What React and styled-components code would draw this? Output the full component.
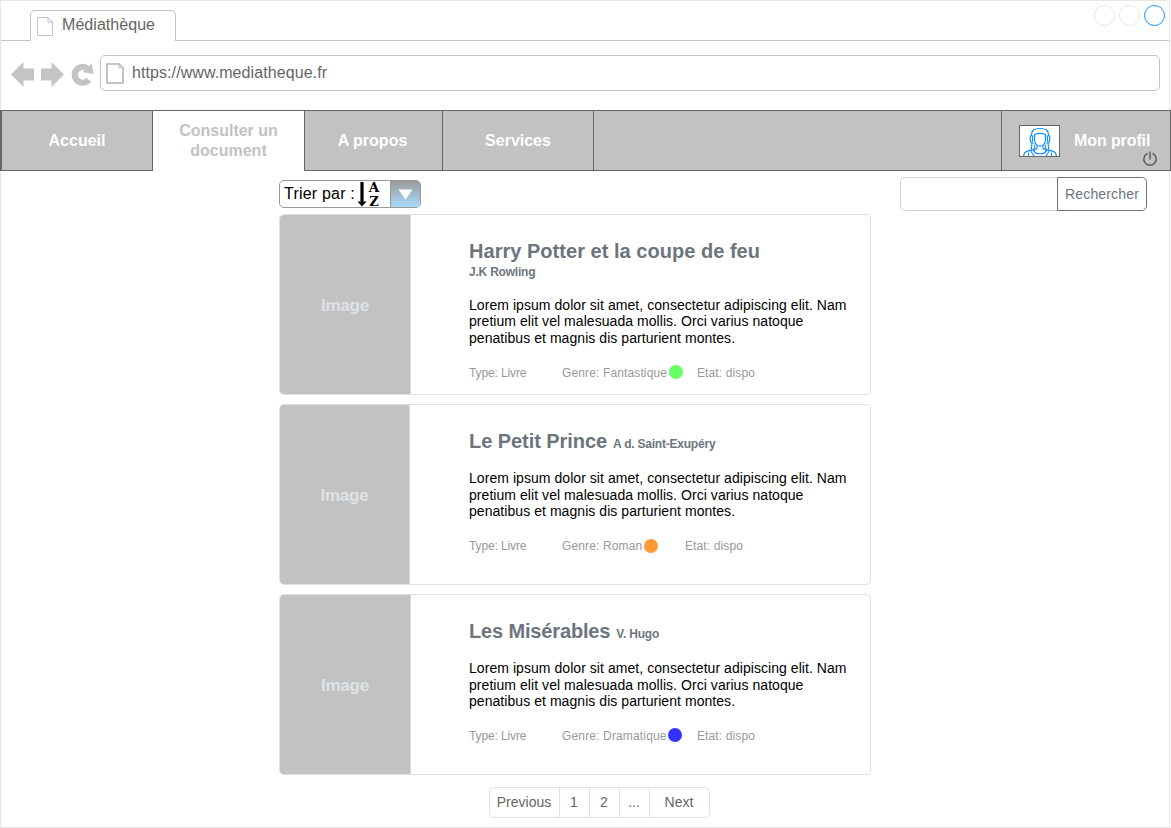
import React from 'react';
import styled, { createGlobalStyle } from 'styled-components';

const Global = createGlobalStyle`
  * { box-sizing: border-box; }
  body {
    margin: 0;
    background: #fff;
    font-family: "Liberation Sans", Arial, sans-serif;
    overflow: hidden;
  }
  button, input { font-family: inherit; padding: 0; }
`;

const Window = styled.div`
  width: 1170px;
  height: 828px;
  border: 1px solid #e6e6e6;
  display: flex;
  flex-direction: column;
`;

/* Browser chrome */
const TabStrip = styled.div`
  height: 40px;
  flex: none;
  display: flex;
  align-items: flex-end;
`;
const StripStart = styled.div`
  width: 29px;
  border-bottom: 1px solid #c4c4c4;
`;
const StripRest = styled.div`
  flex: 1;
  align-self: stretch;
  border-bottom: 1px solid #c4c4c4;
  display: flex;
  justify-content: flex-end;
  gap: 4px;
  padding: 4px 4px 0 0;
`;
const Tab = styled.div`
  width: 146px;
  height: 31px;
  border: 1px solid #c4c4c4;
  border-bottom: 0;
  border-radius: 5px 5px 0 0;
  display: flex;
  align-items: flex-start;
  gap: 9px;
  padding: 5px 0 0 6px;
  font-size: 16px;
  line-height: 18px;
  color: #666;
  svg { margin-top: 1px; }
`;
const TabTitle = styled.span`letter-spacing: 0.05px;`;
const WindowDot = styled.span`
  width: 21px;
  height: 21px;
  border-radius: 50%;
  border: 1px solid ${(p) => (p.$active ? '#1890ff' : '#e6e6e6')};
`;
const Toolbar = styled.div`
  height: 69px;
  flex: none;
  display: flex;
  align-items: flex-start;
  padding: 14px 9px 0 10px;
`;
const NavIcons = styled.div`
  display: flex;
  gap: 7px;
  width: 89px;
  padding-top: 7px;
`;
const Address = styled.div`
  flex: 1;
  height: 36px;
  border: 1px solid #c4c4c4;
  border-radius: 5px;
  display: flex;
  gap: 8px;
  padding: 7px 0 0 5px;
  font-size: 16px;
  line-height: 20px;
  letter-spacing: 0.08px;
  color: #666;
`;

/* Site navigation */
const Nav = styled.nav`
  width: 1171px;
  height: 61px;
  flex: none;
  margin-left: -1px;
  display: flex;
  background: #c2c2c2;
  border-left: 1px solid #666;
`;
const NavItem = styled.a`
  width: ${(p) => p.$width}px;
  display: flex;
  align-items: center;
  justify-content: center;
  text-align: center;
  font-size: 16px;
  font-weight: 700;
  line-height: 20px;
  color: ${(p) => (p.$active ? '#c2c2c2' : '#fff')};
  background: ${(p) => (p.$active ? '#fff' : 'transparent')};
  border-top: 1px solid #666;
  border-right: 1px solid #666;
  border-bottom: ${(p) => (p.$active ? '0' : '1px solid #666')};
  padding: 0 10px ${(p) => (p.$active ? 1 : 0)}px ${(p) => p.$padLeft || 10}px;
  &:first-child { border-left: 1px solid #666; }
`;
const NavSpace = styled.div`
  flex: 1;
  border: 1px solid #666;
  border-left: 0;
`;
const Profile = styled.a`
  position: relative;
  width: 169px;
  display: flex;
  align-items: center;
  gap: 14px;
  padding-left: 17px;
  font-size: 16px;
  font-weight: 700;
  line-height: 20px;
  letter-spacing: -0.1px;
  color: #fff;
  border: 1px solid #666;
  border-left: 0;
`;
const Avatar = styled.span`
  width: 41px;
  height: 32px;
  border: 1px solid #666;
  background: #fff;
  display: flex;
  svg { display: block; }
`;
const Power = styled.svg`
  position: absolute;
  right: 12px;
  bottom: 3px;
`;

/* Page body */
const Main = styled.main`
  display: grid;
  grid-template-columns: 278px 592px 1fr;
  padding-top: 6px;
`;
const Content = styled.section`
  grid-column: 2;
  display: flex;
  flex-direction: column;
  padding-top: 3px;
`;
const Sort = styled.div`
  width: 142px;
  height: 28px;
  margin-bottom: 6px;
  display: flex;
  border: 1px solid #999;
  border-radius: 5px;
  font-size: 16px;
  line-height: 18px;
  letter-spacing: 0.2px;
  color: #000;
`;
const SortText = styled.span`
  width: 73px;
  padding: 4px 0 0 4px;
  white-space: nowrap;
  flex: none;
`;
const SortIcon = styled.svg`
  margin-left: 4px;
  flex: none;
  overflow: visible;
  letter-spacing: 0;
`;
const SortButton = styled.button`
  width: 30px;
  margin-left: auto;
  border: 0;
  border-left: 1px solid #999;
  border-radius: 0 4px 4px 0;
  background: linear-gradient(#999, #a9dcff);
  display: flex;
  justify-content: center;
  align-items: center;
`;
const Search = styled.form`
  grid-column: 3;
  display: flex;
  width: 247px;
  height: 34px;
  margin-left: 29px;
`;
const SearchInput = styled.input`
  width: 157px;
  border: 1px solid #ced4da;
  border-right: 0;
  border-radius: 5px 0 0 5px;
  background: #fff;
`;
const SearchButton = styled.button`
  flex: 1;
  border: 1px solid #6c757d;
  border-radius: 0 5px 5px 0;
  background: #fff;
  color: #6c757d;
  font-size: 14px;
  letter-spacing: 0.16px;
`;
const Cards = styled.div`
  display: flex;
  flex-direction: column;
  gap: 9px;
`;
const Card = styled.article`
  height: 181px;
  display: flex;
  border: 1px solid #dfdfdf;
  border-radius: 5px;
  overflow: hidden;
`;
const Cover = styled.div`
  width: ${(p) => p.$width}px;
  flex: none;
  padding: 2px 0 0 0;
  border-right: 1px solid #d9dadb;
  background: #c2c2c2;
  display: flex;
  align-items: center;
  justify-content: center;
  font-size: 17px;
  font-weight: 700;
  letter-spacing: -0.2px;
  color: #dee2e6;
`;
const Details = styled.div`
  flex: 1;
  margin-left: auto;
  padding: 24px 0 0 ${(p) => p.$indent}px;
`;
const Heading = styled.header`
  display: flex;
  flex-direction: ${(p) => (p.$stacked ? 'column' : 'row')};
  align-items: ${(p) => (p.$stacked ? 'flex-start' : 'baseline')};
  gap: ${(p) => (p.$stacked ? '2px' : '6px')};
  margin-bottom: ${(p) => (p.$stacked ? '17.7px' : '17.3px')};
  color: #6c757d;
`;
const Title = styled.h2`
  margin: 0;
  font-size: 20px;
  line-height: 24px;
  letter-spacing: ${(p) => p.$spacing}px;
`;
const Author = styled.span`
  font-size: 12px;
  font-weight: 700;
  line-height: 14px;
  letter-spacing: -0.22px;
`;
const Summary = styled.p`
  margin: 0 0 ${(p) => (p.$stacked ? 19.8 : 19.2)}px;
  width: 390px;
  font-size: 14px;
  line-height: 16.5px;
  letter-spacing: 0.055px;
  color: #000;
`;
const Meta = styled.div`
  display: flex;
  font-size: 12px;
  line-height: 14px;
  color: #999;
`;
const MetaItem = styled.span`
  width: ${(p) => p.$width}px;
  display: flex;
  white-space: nowrap;
  letter-spacing: ${(p) => p.$spacing || 0}px;
`;
const Status = styled.i`
  width: 14px;
  height: 14px;
  margin: ${(p) => p.$lift}px 0 0 ${(p) => p.$gap}px;
  border-radius: 50%;
  background: ${(p) => p.$color};
  flex: none;
`;
const Pagination = styled.nav`
  align-self: flex-start;
  display: flex;
  height: 31px;
  margin: 12px 0 0 210px;
  border: 1px solid #dee2e6;
  border-radius: 5px;
`;
const Page = styled.a`
  width: ${(p) => p.$width}px;
  display: flex;
  align-items: center;
  justify-content: center;
  padding: 0 1px 1px 0;
  font-size: 14px;
  line-height: 16px;
  color: #666;
  & + & { border-left: 1px solid #dee2e6; }
`;

const DocIcon = ({ w, h, stroke }) => (
  <svg width={w} height={h} viewBox={`0 0 ${w} ${h}`} fill="none" stroke="#c4c4c4" strokeWidth={stroke}>
    <path d={`M${stroke / 2} ${stroke / 2}H${w - 5}L${w - stroke / 2} 5V${h - stroke / 2}H${stroke / 2}Z`} />
    <path d={`M${w - 5} 0V5H${w}`} strokeWidth="1" />
  </svg>
);

const BOOKS = [
  {
    title: 'Harry Potter et la coupe de feu', spacing: 0.03, author: 'J.K Rowling', stacked: true,
    cover: 131, genre: 'Fantastique', genreSpacing: 0.13, genreWidth: 135, color: '#66ff66', lift: -1, gap: 2,
  },
  {
    title: 'Le Petit Prince', spacing: -0.06, author: 'A d. Saint-Exupéry',
    cover: 130, genre: 'Roman', genreSpacing: 0.13, genreWidth: 123, color: '#ff9933', lift: 0, gap: 2,
  },
  {
    title: 'Les Misérables', spacing: -0.15, author: 'V. Hugo',
    cover: 131, genre: 'Dramatique', genreSpacing: 0.15, genreWidth: 135, color: '#3333ff', lift: -1, gap: 1,
  },
];

const Book = ({ book }) => (
  <Card>
    <Cover $width={book.cover}>Image</Cover>
    <Details $indent={189 - book.cover}>
      <Heading $stacked={book.stacked}>
        <Title $spacing={book.spacing}>{book.title}</Title>
        <Author>{book.author}</Author>
      </Heading>
      <Summary $stacked={book.stacked}>
        Lorem ipsum dolor sit amet, consectetur adipiscing elit. Nam<br />
        pretium elit vel malesuada mollis. Orci varius natoque<br />
        penatibus et magnis dis parturient montes.
      </Summary>
      <Meta>
        <MetaItem $width={93} $spacing={-0.12}>Type: Livre</MetaItem>
        <MetaItem $width={book.genreWidth} $spacing={book.genreSpacing}>
          Genre: {book.genre}
          <Status $color={book.color} $lift={book.lift} $gap={book.gap} />
        </MetaItem>
        <MetaItem $spacing={0.12}>Etat: dispo</MetaItem>
      </Meta>
    </Details>
  </Card>
);

export default function App() {
  return (
    <>
      <Global />
      <Window>
        <TabStrip>
          <StripStart />
          <Tab>
            <DocIcon w={16} h={19} stroke={1} />
            <TabTitle>Médiathèque</TabTitle>
          </Tab>
          <StripRest>
            <WindowDot />
            <WindowDot />
            <WindowDot $active />
          </StripRest>
        </TabStrip>
        <Toolbar>
          <NavIcons>
            <svg width="23" height="25" viewBox="0 0 23 25" fill="#c4c4c4">
              <path d="M0 12.5 12.5 0V6.5H23V18.5H12.5V25Z" />
            </svg>
            <svg width="23" height="25" viewBox="0 0 23 25" fill="#c4c4c4">
              <path d="M23 12.5 10.5 0V6.5H0V18.5H10.5V25Z" />
            </svg>
            <svg width="24" height="25" viewBox="0 0 24 25">
              <path d="M16.500 6.600A7.900 7.900 0 1 0 17.800 17.800" fill="none" stroke="#c4c4c4" strokeWidth="6.200" />
              <path d="M20.800 1.500 22.600 12 11.500 10Z" fill="#c4c4c4" />
            </svg>
          </NavIcons>
          <Address>
            <DocIcon w={18} h={21} stroke={2} />
            <span>https://www.mediatheque.fr</span>
          </Address>
        </Toolbar>
        <Nav>
          <NavItem $width={152}>Accueil</NavItem>
          <NavItem $width={152} $active>Consulter un<br />document</NavItem>
          <NavItem $width={138} $padLeft={8}>A propos</NavItem>
          <NavItem $width={151}>Services</NavItem>
          <NavSpace />
          <Profile>
            <Avatar>
              <svg width="39" height="30" viewBox="0 0 39 30" fill="none" stroke="#1890ff" strokeWidth="1.2">
                <path d="M11.500 10C11.500 4 14 2.500 20 2.500S28.500 4 28.500 10" />
                <path d="M14.500 14V8.500C18 7 22 7 25.500 8.500V14C25.500 17.500 23 20 20 20S14.500 17.500 14.500 14Z" />
                <path d="M11.500 9C9.500 11 10 14 11 16.500L13.500 17.500M28.500 9C30.500 11 30 14 29 16.500L26.500 17.500" />
                <path d="M12.500 9.500V16M27.500 9.500V16M12 17 11 25.500M15 18.500 13.500 25.500M28 17 29 25.500M25 18.500 26.500 25.500" />
                <path d="M17 20V22.500C15 24.500 7 24 4.500 27L3.500 30M23 20V22.500C25 24.500 33 24 35.500 27L36.500 30" />
                <path d="M14 24.500C15 29 25 29 26 24.500M8.500 26.500V30M31.500 26.500V30M11 25.500 14 30M29 25.500 26 30" />
              </svg>
            </Avatar>
            <span>Mon profil</span>
            <Power width="16" height="16" viewBox="0 0 16 16" fill="none" stroke="#555" strokeWidth="1.4">
              <path d="M5.500 2.400A6.200 6.200 0 1 0 10.500 2.400" />
              <path d="M8 0.500V8.500" />
            </Power>
          </Profile>
        </Nav>
        <Main>
          <Content>
            <Sort>
              <SortText>Trier par :</SortText>
              <SortIcon width="24" height="26" viewBox="0 0 24 26">
                <path d="M3.400 1H6.600V20.500H9.500L5 25.500 0.500 20.500H3.400Z" fill="#000" />
                <text x="11.800" y="10.800" fontFamily="DejaVu Serif, serif" fontWeight="700" fontSize="13" textLength="10.500" lengthAdjust="spacingAndGlyphs">A</text>
                <text x="12.300" y="24.600" fontFamily="DejaVu Serif, serif" fontWeight="700" fontSize="13.500" textLength="9.500" lengthAdjust="spacingAndGlyphs">Z</text>
              </SortIcon>
              <SortButton>
                <svg width="15" height="11" viewBox="0 0 15 11"><path d="M0.500 0.500H14.500L7.500 10.500Z" fill="#fff" /></svg>
              </SortButton>
            </Sort>
            <Cards>
              {BOOKS.map((b) => <Book key={b.title} book={b} />)}
            </Cards>
            <Pagination>
              <Page $width={69}>Previous</Page>
              <Page $width={30}>1</Page>
              <Page $width={30}>2</Page>
              <Page $width={30}>...</Page>
              <Page $width={60}>Next</Page>
            </Pagination>
          </Content>
          <Search>
            <SearchInput />
            <SearchButton type="button">Rechercher</SearchButton>
          </Search>
        </Main>
      </Window>
    </>
  );
}
